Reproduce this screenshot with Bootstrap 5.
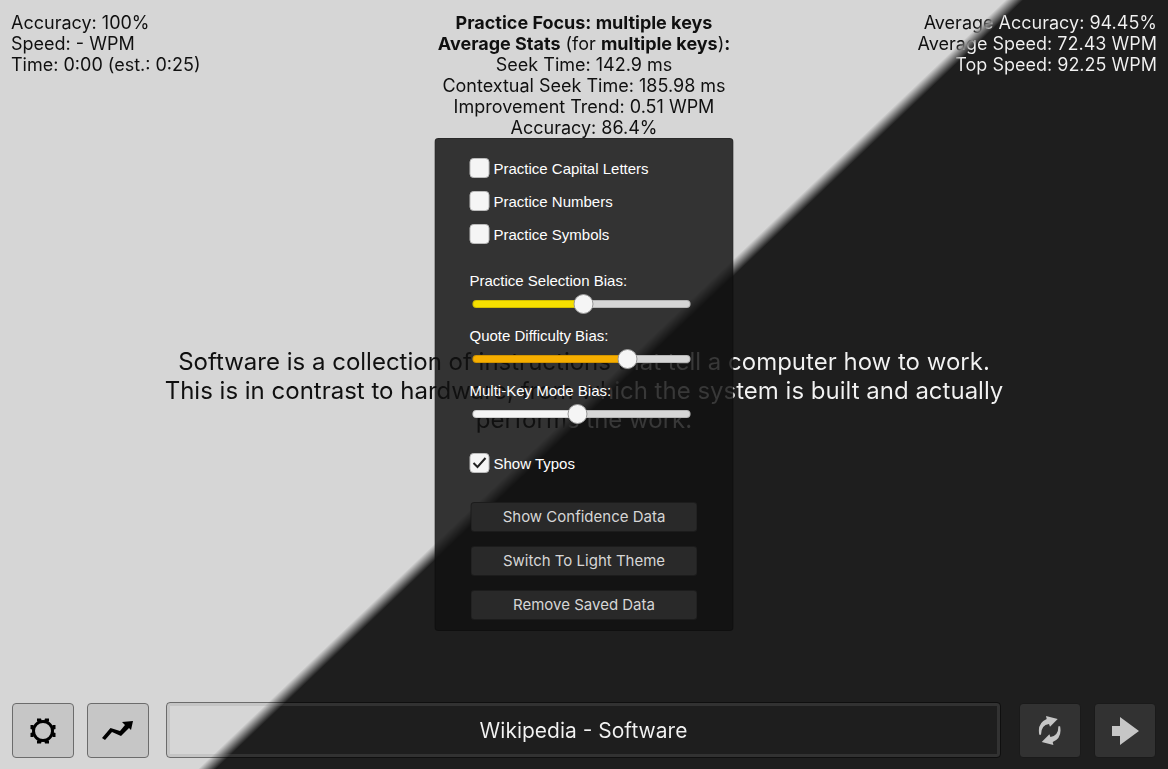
<!DOCTYPE html>
<html lang="en">
<head>
<meta charset="utf-8">
<meta name="viewport" content="width=device-width, initial-scale=1">
<title>Typing Practice</title>
<link href="https://cdn.jsdelivr.net/npm/bootstrap@5.3.0/dist/css/bootstrap.min.css" rel="stylesheet">
<style>
  :root {
    --split-a: 50.9%;
    --split-b: 51.8%;
  }
  body {
    display: grid;
    grid-template-rows: 1fr auto 1fr;
    font-family: Inter, "Liberation Sans", sans-serif;
    background: linear-gradient(136.4deg, #d6d6d6 var(--split-a), #1e1e1e var(--split-b)) fixed;
  }
  /* Text that turns from dark to light where the two themes meet */
  .split-text {
    color: transparent;
    background: linear-gradient(136.4deg, #101010 var(--split-a), #f2f2f2 var(--split-b)) fixed;
    -webkit-background-clip: text;
    background-clip: text;
  }
  .stats { padding: 12px 11px 0; font-size: 18px; line-height: 21px; z-index: 2; }
  .stats b { font-weight: 700; }
  .side { flex: 1 1 0; }
  .quote { padding-top: 12px; font-size: 24px; line-height: 29px; }

  .settings {
    top: 100%;
    width: 299px;
    padding: 19px 35px 10px 34px;
    color: #fff;
    font-family: "Liberation Sans", Arial, sans-serif;
    background: rgba(17, 17, 17, .826);
    border: 1px solid rgba(0, 0, 0, .2);
    border-radius: 4px;
  }
  .settings label { font-size: 15px; line-height: 22px; }
  .settings .form-check-input {
    width: 20px; height: 20px; margin: 0; float: none;
    background-color: #f5f5f5; border: 1px solid #bbb; border-radius: 4px;
  }
  .settings .form-check-input:checked {
    background-image: url("data:image/svg+xml,%3csvg xmlns='http://www.w3.org/2000/svg' viewBox='0 0 18 18'%3e%3cpath fill='none' stroke='%23222' stroke-width='2' d='M3 9l4 4L15 4'/%3e%3c/svg%3e");
    background-size: 18px;
  }
  .checks { gap: 11px; }
  .sliders { gap: 11px; margin-top: 24px; }
  .bias {
    --tone: #f5f5f5;
    appearance: none; -webkit-appearance: none;
    display: block; width: 218px; height: 20px; margin: 2px 0 0 3px; padding: 0; background: none;
  }
  .bias::-webkit-slider-runnable-track {
    height: 8px; border-radius: 4px;
    background: linear-gradient(90deg, var(--tone) var(--fill), #d6d6d6 var(--fill));
    box-shadow: inset 0 0 0 1px rgba(0, 0, 0, .15);
  }
  .bias::-webkit-slider-thumb {
    -webkit-appearance: none;
    width: 20px; height: 20px; margin-top: -6px;
    border: 1px solid #999; border-radius: 50%; background: #f5f5f5;
  }
  .yellow { --tone: #f6e000; }
  .orange { --tone: #f6ae00; }
  .typos { margin-top: 29px; }
  .actions { gap: 14px; margin: 27px 0 0 1px; }
  .actions .btn {
    height: 30px; padding: 0; font: 15px/28px Inter, sans-serif; color: #d6d6d6;
    background: #292929; border: 1px solid rgba(0, 0, 0, .3); border-radius: 4px;
  }

  .controls { padding: 0 12px 11px; }
  .tool {
    width: 62px; height: 55px; padding: 0; border: 1px solid #6c6c6c; border-radius: 4px;
    background: #c6c6c6; color: #000;
  }
  .tool.night { background: #323232; color: #c6c6c6; border-color: #1a1a1a; }
  .source {
    height: 56px; margin: 0 18px 0 17px; padding: 2px 0 0; font-size: 21px; border-radius: 4px;
    border: 1px solid rgba(0, 0, 0, .5);
    box-shadow: inset 0 0 0 3px rgba(128, 128, 128, .2);
  }
  .pair { gap: 13px; }
</style>
</head>
<body class="min-vh-100 m-0">
  <header class="stats d-flex position-relative">
    <div class="side"><div class="split-text">Accuracy: 100%<br>Speed: - WPM<br>Time: 0:00 (est.: 0:25)</div></div>
    <div class="position-relative align-self-start text-center">
      <div class="split-text"><b>Practice Focus: multiple keys</b><br><b>Average Stats</b> (for <b>multiple keys</b>)<b>:</b><br>Seek Time: 142.9 ms<br>Contextual Seek Time: 185.98 ms<br>Improvement Trend: 0.51 WPM<br>Accuracy: 86.4%</div>
      <form class="settings position-absolute start-50 translate-middle-x text-start">
        <div class="checks d-flex flex-column">
          <div class="d-flex gap-1"><input class="form-check-input" type="checkbox" id="caps"><label for="caps">Practice Capital Letters</label></div>
          <div class="d-flex gap-1"><input class="form-check-input" type="checkbox" id="nums"><label for="nums">Practice Numbers</label></div>
          <div class="d-flex gap-1"><input class="form-check-input" type="checkbox" id="syms"><label for="syms">Practice Symbols</label></div>
        </div>
        <div class="sliders d-flex flex-column">
          <div><label class="d-block" for="sel">Practice Selection Bias:</label><input class="bias yellow" type="range" id="sel" value="51" style="--fill:51%"></div>
          <div><label class="d-block" for="diff">Quote Difficulty Bias:</label><input class="bias orange" type="range" id="diff" value="73" style="--fill:73%"></div>
          <div><label class="d-block" for="multi">Multi-Key Mode Bias:</label><input class="bias" type="range" id="multi" value="48" style="--fill:48%"></div>
        </div>
        <div class="typos d-flex gap-1"><input class="form-check-input" type="checkbox" id="typos" checked><label for="typos">Show Typos</label></div>
        <div class="actions d-grid">
          <button type="button" class="btn">Show Confidence Data</button>
          <button type="button" class="btn">Switch To Light Theme</button>
          <button type="button" class="btn">Remove Saved Data</button>
        </div>
      </form>
    </div>
    <div class="side text-end"><div class="split-text">Average Accuracy: 94.45%<br>Average Speed: 72.43 WPM<br>Top Speed: 92.25 WPM</div></div>
  </header>

  <main class="quote col-9 mx-auto px-2 text-center">
    <p class="split-text m-0">Software is a collection of instructions that tell a computer how to work. This is in contrast to hardware, from which the system is built and actually performs the work.</p>
  </main>

  <footer class="controls d-flex align-items-end">
    <div class="pair d-flex">
      <button type="button" class="tool btn" aria-label="Settings">
        <svg width="26" height="26" viewBox="-13 -13 26 26" fill="currentColor"><circle r="9.500" fill="none" stroke="currentColor" stroke-width="3"/><path id="tooth" d="M-6-12.500h4l1 3h-5zM6-12.500h-4l-1 3h5z"/><use href="#tooth" transform="rotate(90)"/><use href="#tooth" transform="rotate(180)"/><use href="#tooth" transform="rotate(270)"/></svg>
      </button>
      <button type="button" class="tool btn" aria-label="Progress">
        <svg width="32" height="24" viewBox="0 0 32 24" fill="currentColor"><path d="M0 19L8.500 9l9.500 3 5-6-3-3L31 2 29 11l-2-2-8 8-9-4-7 8z"/></svg>
      </button>
    </div>
    <button type="button" class="source btn flex-grow-1"><span class="split-text">Wikipedia - Software</span></button>
    <div class="pair d-flex">
      <button type="button" class="tool night btn" aria-label="Restart">
        <svg width="24" height="31" viewBox="0 0 24 31" fill="currentColor"><path id="arc" d="M1.300 19.700Q-1 8 8.700 4L8 1 19.700 4 12 11.700 11 9Q3 10 3 19.700z"/><use href="#arc" transform="rotate(180 11.700 15.500)"/></svg>
      </button>
      <button type="button" class="tool night btn" aria-label="Next">
        <svg width="28" height="28" viewBox="0 0 28 28" fill="currentColor"><path d="M1 9h8V0l19 14L9 28V19H1z"/></svg>
      </button>
    </div>
  </footer>
<script src="https://cdn.jsdelivr.net/npm/bootstrap@5.3.0/dist/js/bootstrap.bundle.min.js"></script>
</body>
</html>
